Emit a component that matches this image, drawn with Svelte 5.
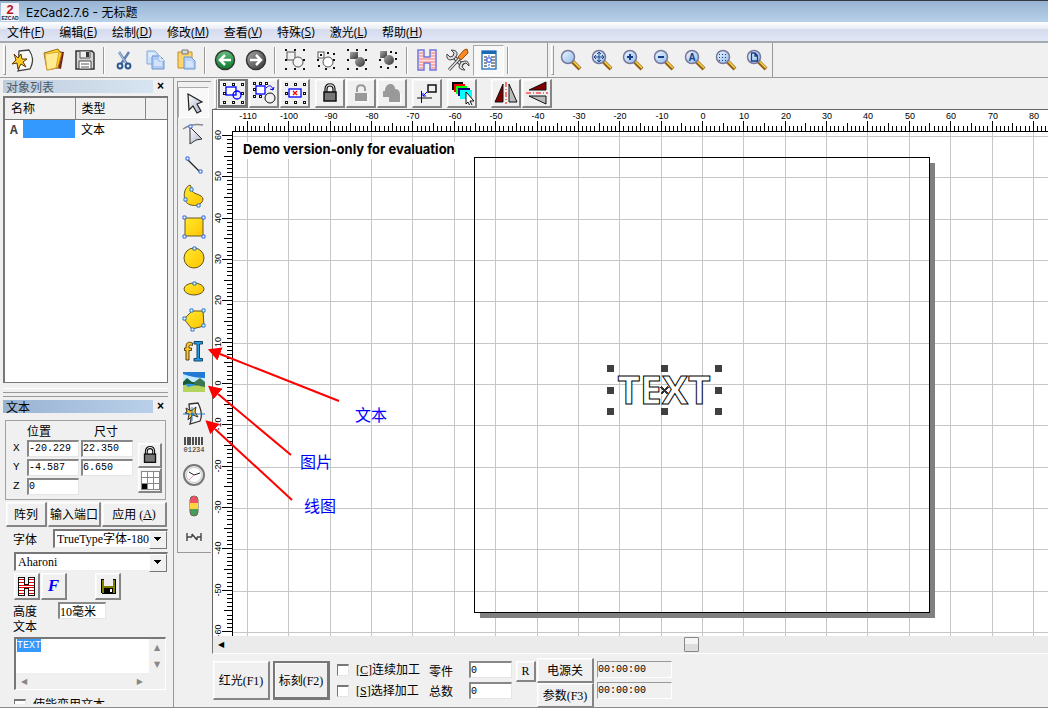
<script lang="ts">
  import { onMount } from "svelte";

  const icons: Record<string, string> = {
    new: `<path d="M8 3l10-1c4 6 5 11 1 19l-12 2c3-7 0-13 1-20z" fill="#fbfbfb" stroke="#444" stroke-width="1.3"/><path d="M3 6l4 4 3-4 1 5 5 0-4 3 3 5-5-3-3 5-1-6-5 1 4-4z" fill="#ffc928" stroke="#5c3b00"/>`,
    open: `<path d="M13 3l9 1-3 17-9-2z" fill="#7a2418"/><path d="M2 5l14-4 2 3 2 1-4 15-11 2z" fill="url(#gold)" stroke="#99691a"/><path d="M3 6l14-2-3 16-9 2z" fill="#ffeb91" stroke="#d9a63c"/>`,
    save: `<path d="M3 3h16l2 2v16H3z" fill="#d4d4d4" stroke="#333" stroke-width="1.5"/><path d="M7 3h10v7H7z" fill="#eee" stroke="#555"/><path d="M13 4h3v5h-3z" fill="#333"/><path d="M6 13h12v8H6z" fill="#fff" stroke="#444"/><path d="M8 16h8M8 19h8" stroke="#555"/>`,
    cut: `<path d="M7 4l8 12M17 4L9 16" stroke="#5f7fae" stroke-width="2.4"/><path d="M7 4l7 11" stroke="#d9e9ff" stroke-width=".8"/><circle cx="8" cy="18" r="2.4" fill="none" stroke="#2b5797" stroke-width="2"/><circle cx="16" cy="18" r="2.4" fill="none" stroke="#2b5797" stroke-width="2"/>`,
    copy: `<path d="M4 3h8l3 3v10H4z" fill="#cfe2fb" stroke="#86aadb"/><path d="M9 8h8l4 4v9H9z" fill="#aecbf3" stroke="#6c94cf"/><path d="M17 8v4h4M6 6h5M6 8h3M11 13h4M11 15h8M11 17h8" fill="none" stroke="#f8fbff"/>`,
    paste: `<path d="M4 4h14v16H4z" fill="#ffd56e" stroke="#c18b28"/><path d="M8 2h6v4H8z" fill="#d8d8d8" stroke="#777"/><path d="M10 9h7l4 4v8H10z" fill="#b7d3f7" stroke="#6c94cf"/><path d="M12 14h6M12 16h7M12 18h7" stroke="#edf5ff"/>`,
    back: `<circle cx="12" cy="12" r="9.5" fill="url(#green)" stroke="#333" stroke-width="1.5"/><path d="M18 12H8M12 7l-5 5 5 5" fill="none" stroke="#fff" stroke-width="2.5"/>`,
    forward: `<circle cx="12" cy="12" r="9.5" fill="url(#dark)" stroke="#333" stroke-width="1.5"/><path d="M6 12h10M12 7l5 5-5 5" fill="none" stroke="#fff" stroke-width="2.5"/>`,
    combine: `<rect x="4" y="4" width="8" height="8" fill="none" stroke="#555"/><circle cx="15" cy="14" r="5" fill="#f4f4f4" stroke="#555"/><path d="M2 1h2v2H2zM11 1h2v2h-2zM20 1h2v2h-2zM2 11h2v2H2zM20 11h2v2h-2zM2 20h2v2H2zM11 20h2v2h-2zM20 20h2v2h-2z" fill="#111"/>`,
    uncombine: `<rect x="4" y="4" width="6" height="6" fill="#fff" stroke="#555"/><circle cx="14" cy="14" r="5" fill="#fff" stroke="#555"/><path d="M6 6h2v2H6zM13 4h2v2h-2zM3 11h2v2H3zM19 5h2v2h-2zM19 11h2v2h-2zM4 17h2v2H4zM19 19h2v2h-2zM11 20h2v2h-2z" fill="#111"/>`,
    group: `<rect x="5" y="4" width="8" height="7" fill="url(#dark)"/><circle cx="15" cy="14" r="5" fill="url(#dark)"/><path d="M2 1h2v2H2zM11 1h2v2h-2zM20 1h2v2h-2zM2 11h2v2H2zM20 11h2v2h-2zM2 20h2v2H2zM11 20h2v2h-2zM20 20h2v2h-2z" fill="#111"/>`,
    ungroup: `<rect x="4" y="3" width="7" height="7" fill="url(#dark)"/><circle cx="13" cy="12" r="5" fill="url(#dark)"/><path d="M14 3h2v2h-2zM19 4h2v2h-2zM3 11h2v2H3zM19 10h2v2h-2zM4 18h2v2H4zM19 18h2v2h-2zM11 19h2v2h-2z" fill="#111"/>`,
    hatch: `<path d="M3 2h6v7h6V2h6v20h-6v-7H9v7H3z" fill="#ffe4e4" stroke="#6d75dc" stroke-width="1.5"/><path d="M4 5h4M16 5h4M4 8h4M16 8h4M4 11h16M4 14h16M4 17h4M16 17h4M4 20h4M16 20h4" stroke="#f27878"/>`,
    tools: `<path d="M7 8l10 10" stroke="#444" stroke-width="4"/><path d="M7 8l11 11" stroke="#ddd" stroke-width="2"/><path d="M5 2l3 3-1 3-3 1-3-3q-1 5 3 6l4-1 3-4q1-5-6-5zM19 22l-3-3 1-3 3-1 3 3q0-5-4-5l-4 1-2 4q0 4 6 4z" fill="#ddd" stroke="#444"/><path d="M13 11L3 22" stroke="#444" stroke-width="3"/><path d="M13 11L3 22" stroke="#eee" stroke-width="1.2"/><path d="M21 1l1 4-7 7-3-3 6-7z" fill="#f98a20" stroke="#9d4b0d"/>`,
    list: `<rect x="5" y="3" width="14" height="18" fill="#fff" stroke="#176bb4" stroke-width="1.3"/><path d="M5 3h14v3H5z" fill="#176bb4"/><path d="M7 9h3M7 12h3M7 15h3M7 18h3M14 9h4M14 12h4M14 15h4M14 18h4" stroke="#222"/><path d="M12 7v13" stroke="#25f" stroke-dasharray="2 1"/><path d="M10 10h4v4h-4z" fill="#fff" stroke="#25f"/>`,
    zoom: ``,
    zoomMove: `<path d="M9 4v10M4 9h10M7 6l2-2 2 2M7 12l2 2 2-2M6 7L4 9l2 2M12 7l2 2-2 2" fill="none" stroke="#244986"/>`,
    zoomIn: `<path d="M9 6v6M6 9h6" stroke="#173f85" stroke-width="2"/>`,
    zoomOut: `<path d="M6 9h6" stroke="#173f85" stroke-width="2"/>`,
    zoomAll: `<text x="9" y="13" font-family="Liberation Sans" font-size="10" font-weight="bold" text-anchor="middle" fill="#173f85">A</text>`,
    zoomSelection: `<path d="M5 6.5h1M8 6.5h1M11 6.5h1M5 9.5h1M8 9.5h1M11 9.5h1M5 12.5h1M8 12.5h1M11 12.5h1" stroke="#173f85"/>`,
    zoomPage: `<path d="M6.500 5h3.500l2.500 2.500v5.500h-6zM10 5v3h2" fill="none" stroke="#173f85" stroke-width="1.3"/>`,
    selectAll: `<rect x="5" y="6" width="10" height="8" fill="#fff" stroke="#00f" stroke-width="1.3"/><circle cx="16" cy="14" r="4" fill="none" stroke="#00f" stroke-width="1.3"/>`,
    invert: `<rect x="4" y="5" width="9" height="8" fill="#fff" stroke="#00f" stroke-width="1.3"/><circle cx="18" cy="17" r="5" fill="none" stroke="#111"/><path d="M14 7c4-4 6-2 7 2m-3-1l3 1 1-3" fill="none" stroke="#00f"/><path d="M1 1h3v3H1zM7 1h3v3H7zM13 1h3v3h-3zM1 7h3v3H1zM1 14h3v3H1zM7 14h3v3H7z" fill="#111"/><path d="M2 2h1v1H2zM8 2h1v1H8zM14 2h1v1h-1zM2 8h1v1H2zM2 15h1v1H2zM8 15h1v1H8z" fill="#fff"/>`,
    selectNone: `<rect x="6" y="8" width="12" height="8" fill="#fff" stroke="#00f" stroke-width="1.3"/><path d="M10 10l4 4M14 10l-4 4" stroke="red" stroke-width="1.3"/>`,
    lock: `<path d="M7 11V8c0-7 10-7 10 0v3M9 11V8c0-4 6-4 6 0v3" fill="none" stroke="#111" stroke-width="1.2"/><rect x="6" y="11" width="12" height="9" fill="#777" stroke="#111" stroke-width="1.5"/>`,
    unlock: `<path d="M8 11V8c0-5 8-5 8 0v2" fill="none" stroke="#999" stroke-width="2"/><path d="M6 12h12v8H6z" fill="#999"/><path d="M7 21h12V12" fill="none" stroke="#fff"/>`,
    unlockAll: `<path d="M3 10h2c0-9 10-9 10-2 4 0 5 3 5 6v7H9v-5H3z" fill="#999"/><path d="M9 22h12V13" fill="none" stroke="#fff"/>`,
    origin: `<path d="M2 17h15M6.500 10v12" stroke="#111"/><rect x="13" y="4" width="8" height="7" fill="none" stroke="#111" stroke-width="1.5"/><path d="M12 11l-4 4m0-3v3h3" fill="none" stroke="#00f"/>`,
    layers: `<path d="M2 1h11v8H2z" fill="#000"/><path d="M4 3h11v8H4z" fill="red"/><path d="M6 5h11v8H6z" fill="#0f0"/><path d="M8 7h12v8H8z" fill="#000080"/><path d="M10 9h12v9H10z" fill="cyan"/><path d="M16 11l8 9h-4l2 4-2 1-2-4-2 2z" fill="#fff" stroke="#111"/>`,
    mirrorH: `<path d="M9 3v18H1z" fill="#800000" stroke="#111"/><path d="M15 3v18h8z" fill="#bbb" stroke="#111"/><path d="M12 1v22" stroke="red" stroke-dasharray="5 2 1 2"/>`,
    mirrorV: `<path d="M21 1v8H4z" fill="#800000" stroke="#111"/><path d="M21 15v8L4 15z" fill="#bbb" stroke="#111"/><path d="M1 12h22" stroke="red" stroke-dasharray="5 2 1 2"/>`,
    pick: `<path d="M6 3l14 8-5 2 4 7-4 2-4-7-4 4z" fill="url(#arrow)" stroke="#222" stroke-width="1.2"/>`,
    node: `<path d="M1 7Q10 1 21 3" fill="none" stroke="#888" stroke-width="1.5"/><path d="M8 5l12 12-6 1-6 4z" fill="url(#arrow)" stroke="#333"/><path d="M7 3h3v3H7z" fill="#fff" stroke="#36d"/>`,
    line: `<path d="M5 6l13 13" stroke="#222" stroke-width="1.3"/><path d="M4 4h3v3H4zM17 17h3v3h-3z" fill="#fff" stroke="#36d"/>`,
    curve: `<path d="M3 16C1 10 3 3 8 1c2 1 0 4 2 6 3 4 10 3 11 8-1 9-16 8-18 1z" fill="url(#gold)" stroke="#66541b"/><path d="M8 4h3v3H8zM2 14h3v3H2zM15 20h3v3h-3z" fill="#fff" stroke="#27c"/>`,
    rect: `<rect x="3" y="3" width="18" height="18" fill="url(#gold)" stroke="#665a28"/><path d="M1 1h3v3H1zM20 1h3v3h-3zM1 20h3v3H1zM20 20h3v3h-3z" fill="#fff" stroke="#36d"/>`,
    circle: `<circle cx="12" cy="12" r="10" fill="url(#gold)" stroke="#66541b"/><path d="M11 1h3v3h-3z" fill="#fff" stroke="#27c"/>`,
    ellipse: `<ellipse cx="12" cy="12" rx="10" ry="6" fill="url(#gold)" stroke="#66541b"/><path d="M11 5h3v3h-3z" fill="#fff" stroke="#27c"/>`,
    polygon: `<path d="M10 3h11l1 15-12 3L2 11z" fill="url(#gold)" stroke="#66541b"/><path d="M8 1h3v3H8zM20 1h3v3h-3zM1 9h3v3H1zM9 20h3v3H9zM20 16h3v3h-3z" fill="#fff" stroke="#27c"/>`,
    text: `<path d="M10.500 4c-5-2-6.500 0-6.500 5H2.500v2.500H4V21h3v-9.500h2.500V9H7c0-2.500 0-3.500 3.500-2.500z" fill="#ffc522" stroke="#554519"/><path d="M12 2.500h8.500V5h-3v14.500h3V22H12v-2.500h3V5h-3z" fill="#1f9be8" stroke="#174663"/>`,
    picture: `<path d="M1 2h22v20H1z" fill="#c4ebff"/><path d="M1 2h22v6Q12 8 1 4z" fill="#2379d4"/><path d="M1 12l4-4 5 4 6 0v8L1 18z" fill="#175b36"/><path d="M11 13l7-5 5 4v7z" fill="#3d7650"/><path d="M1 15q9-1 22 2v5H1z" fill="#b5d35f"/><path d="M3 14q7-1 11 1l-8 2z" fill="#2c92e8"/>`,
    vector: `<path d="M7 3l9-1c3 6 5 12 2 18l-10 3c3-7-1-13-1-20z" fill="#f8f8f8" stroke="#333" stroke-width="1.3"/><path d="M4 7l5 3 5-4-1 5 3 5-5-2-5 5 1-6-4-1 2-1z" fill="#ffc926" stroke="#333"/><path d="M1 13h22M10 6v14" stroke="#277acc"/><path d="M9 12h3v3H9z" fill="#277acc"/>`,
    barcode: `<path d="M3 5v8M6 5v8M8 5v8M11 5v8M14 5v8M17 5v8M20 5v8" stroke="#333" stroke-width="1.7"/><text x="12" y="20" font-family="Liberation Mono" font-size="7" text-anchor="middle" fill="#222">01234</text>`,
    clock: `<circle cx="12" cy="12" r="10" fill="#eee" stroke="#777" stroke-width="2"/><circle cx="12" cy="12" r="7.5" fill="#fff" stroke="#ccc"/><path d="M7 9l5 3 6-2" fill="none" stroke="#222"/><path d="M12 12l-5 5" stroke="#e99"/>`,
    io: `<rect x="8" y="2" width="8" height="20" rx="4" fill="#4c9c59" stroke="#665"/><path d="M8 9V6q4-8 8 0v3z" fill="#ed5364"/><path d="M8 9h8v6H8z" fill="#ffd33d"/>`,
    extend: `<path d="M5 8v8M19 8v8M5 12h5M15 12h4M10 9l5 6M10 12V9M15 15v-3" fill="none" stroke="#444" stroke-width="1.4"/>`,
  };

  const dots = `<path d="M2 2h3v3H2zM11 2h3v3h-3zM20 2h3v3h-3zM2 11h3v3H2zM20 11h3v3h-3zM2 20h3v3H2zM11 20h3v3h-3zM20 20h3v3h-3z" fill="#111"/><path d="M3 3h1v1H3zM12 3h1v1h-1zM21 3h1v1h-1zM3 12h1v1H3zM21 12h1v1h-1zM3 21h1v1H3zM12 21h1v1h-1zM21 21h1v1h-1z" fill="#fff"/>`;
  const lens = `<path d="M13 13l8 8" stroke="#93601b" stroke-width="4"/><path d="M14 13l7 7" stroke="#ffdc45" stroke-width="1.5"/><circle cx="9" cy="9" r="6.5" fill="url(#glass)" stroke="#77779e" stroke-width="1.5"/>`;

  const menus = [
    ["文件", "F"], ["编辑", "E"], ["绘制", "D"], ["修改", "M"],
    ["查看", "V"], ["特殊", "S"], ["激光", "L"], ["帮助", "H"],
  ];
  const mainTools = [
    ["new", "open", "save"],
    ["cut", "copy", "paste"],
    ["back", "forward"],
    ["combine", "uncombine", "group", "ungroup"],
    ["hatch", "tools", "list"],
  ];
  const zoomTools = ["zoom", "zoomMove", "zoomIn", "zoomOut", "zoomAll", "zoomSelection", "zoomPage"];
  const editTools = [
    ["selectAll", "invert", "selectNone"],
    ["lock", "unlock", "unlockAll"],
    ["origin"],
    ["layers"],
    ["mirrorH", "mirrorV"],
  ];
  const drawTools = ["pick", "node", "line", "curve", "rect", "circle", "ellipse", "polygon", "text", "picture", "vector", "barcode", "clock", "io", "extend"];

  // origin of the work area and size of one millimetre, in pixels
  const ox = 489;
  const oy = 274;
  const mm = 4.136;
  const px = (v: number) => Math.round(ox + v * mm);
  const py = (v: number) => Math.round(oy - v * mm);
  const range = (from: number, to: number) => Array.from({ length: Math.max(0, to - from + 1) }, (_, i) => from + i);
  const tick = (v: number) => (v % 10 === 0 ? 10 : v % 5 === 0 ? 8 : 5);
  const handles = [[397, 258], [451, 258], [505, 258], [397, 280], [505, 280], [397, 301], [451, 301], [505, 301]];

  let width = $state(835);
  let depth = $state(525);
  let xs = $derived(range(-113, Math.floor((width - ox) / mm)));
  let ys = $derived(range(-Math.floor((depth - oy) / mm), 60));

  let posX = $state("-20.229");
  let posY = $state("-4.587");
  let posZ = $state("0");
  let sizeX = $state("22.350");
  let sizeY = $state("6.650");
  let height = $state("10毫米");
  let content = $state("TEXT");
  let parts = $state("0");
  let total = $state("0");
  let scroll = $state(566);
  let tool = $state("pick");
  let area: HTMLTextAreaElement;

  onMount(() => {
    area.focus({ preventScroll: true });
    area.select();
  });
</script>

{#snippet icon(name: string, size = 24)}
  <svg width={size} height={size} viewBox="0 0 24 24" aria-hidden="true">
    {@html (name.startsWith("zoom") ? lens : name === "selectAll" || name === "selectNone" ? dots : "") + icons[name]}
  </svg>
{/snippet}

<svg class="defs" width="0" height="0">
  <defs>
    <linearGradient id="gold" x2="1" y2="1"><stop stop-color="#ffe92e" /><stop offset="1" stop-color="#ffc400" /></linearGradient>
    <linearGradient id="arrow" x2="1" y2="1"><stop stop-color="#fff" /><stop offset="1" stop-color="#a9afc8" /></linearGradient>
    <linearGradient id="green" x2="0" y2="1"><stop stop-color="#63bd7c" /><stop offset="1" stop-color="#087c2b" /></linearGradient>
    <linearGradient id="dark" x2="1" y2="1"><stop stop-color="#aaa" /><stop offset="1" stop-color="#333" /></linearGradient>
    <linearGradient id="glass" x2="1" y2="1"><stop stop-color="#eef8ff" /><stop offset="1" stop-color="#8fbbe9" /></linearGradient>
  </defs>
</svg>

<div class="window">
  <header class="title">
    <svg width="18" height="18" viewBox="0 0 18 18" aria-hidden="true">
      <rect width="18" height="18" fill="#f4f2f7" />
      <text x="9" y="11" class="logo-num">2</text>
      <text x="9" y="17" class="logo-name">EZCAD</text>
    </svg>
    <span>EzCad2.7.6 - 无标题</span>
  </header>

  <nav class="menu">
    {#each menus as [name, key]}
      <button>{name}(<u>{key}</u>)</button>
    {/each}
  </nav>

  <div class="toolbar">
    <i class="grip"></i>
    {#each mainTools as group}
      {#each group as name}
        <button class:on={name === "list"} aria-label={name}>{@render icon(name)}</button>
      {/each}
      <i class="sep"></i>
    {/each}
    <i class="space"></i>
    <i class="grip"></i>
    {#each zoomTools as name}
      <button aria-label={name}>{@render icon(name)}</button>
    {/each}
    <i class="end"></i>
  </div>

  <main>
    <aside>
      <div class="caption inactive"><h2>对象列表</h2><button aria-label="关闭对象列表">×</button></div>
      <div class="objects">
        <table>
          <thead><tr><th>名称</th><th>类型</th><th></th></tr></thead>
          <tbody><tr><td><div class="cell"><b>A</b><span class="picked"></span></div></td><td>文本</td><td></td></tr></tbody>
        </table>
      </div>
      <div class="split"></div>
      <div class="caption"><h2>文本</h2><button aria-label="关闭文本">×</button></div>

      <div class="group">
        <div class="coords">
          <span></span><span class="head">位置</span><span class="head right">尺寸</span>
          <label for="x">X</label><input id="x" bind:value={posX} /><input aria-label="尺寸 X" bind:value={sizeX} />
          <label for="y">Y</label><input id="y" bind:value={posY} /><input aria-label="尺寸 Y" bind:value={sizeY} />
          <label for="z">Z</label><input id="z" bind:value={posZ} />
        </div>
        <div class="side">
          <button class="raised" aria-label="锁定比例">{@render icon("lock", 22)}</button>
          <button class="raised" aria-label="基准点">
            <svg width="20" height="20" viewBox="0 0 20 20" shape-rendering="crispEdges">
              <path d="M1 1h18v18H1z" fill="#fff" /><path d="M1 13h6v6H1z" />
              <path d="M1 1h18v18H1zM7 1v18M13 1v18M1 7h18M1 13h18" fill="none" stroke="#888" />
            </svg>
          </button>
        </div>
      </div>

      <div class="actions">
        <button class="raised">阵列</button>
        <button class="raised">输入端口</button>
        <button class="raised">应用 (<u>A</u>)</button>
      </div>
      <div class="font-row">
        <label for="kind">字体</label>
        <div class="combo"><select id="kind"><option>TrueType字体-180</option></select></div>
      </div>
      <div class="combo face"><select aria-label="字体名称"><option>Aharoni</option></select></div>
      <div class="styles">
        <button class="raised" aria-label="填充">
          <svg width="17" height="19" viewBox="0 0 17 19" shape-rendering="crispEdges">
            <path d="M.5 .5h6v7h4v-7h6v18h-6v-7h-4v7h-6z" fill="#fff" stroke="#111" />
            <path d="M1 2.500h5M1 5.500h5M11 2.500h5M11 5.500h5M1 8.500h15M1 10.500h15M1 13.500h5M1 16.500h5M11 13.500h5M11 16.500h5" stroke="#d00" />
          </svg>
        </button>
        <button class="raised italic">F</button>
        <button class="raised disk" aria-label="保存">
          <svg width="16" height="16" viewBox="0 0 16 16" shape-rendering="crispEdges">
            <path d="M1 1h14v14H2l-1-1z" fill="#808000" stroke="#000" /><path d="M4 1h9v7H4z" fill="#eee" /><path d="M4 10h9v5H4z" /><path d="M10 11h2v3h-2z" fill="#fff" />
          </svg>
        </button>
      </div>
      <div class="height"><label for="height">高度</label><input id="height" bind:value={height} /></div>
      <label class="text-label" for="content">文本</label>
      <div class="editor">
        <textarea id="content" bind:this={area} bind:value={content}></textarea>
        <div class="vbar"><span>▲</span><span>▼</span></div>
        <div class="hbar"><span>◀</span><span>▶</span></div>
      </div>
      <div class="variable"><label><input type="checkbox" />使能变用文本</label></div>
    </aside>

    <div class="draw">
      <div class="draw-list">
        {#each drawTools as name}
          <button class:on={tool === name} aria-label={name} onclick={() => (tool = name)}>{@render icon(name)}</button>
        {/each}
      </div>
    </div>

    <section>
      <div class="edit">
        <i class="grip"></i>
        {#each editTools as group}
          <div class="set">
            {#each group as name}
              <button class="raised" class:default={name === "selectAll"} aria-label={name}>{@render icon(name)}</button>
            {/each}
          </div>
        {/each}
      </div>

      <div class="canvas" bind:clientWidth={width} bind:clientHeight={depth}>
        <svg {width} height={depth} shape-rendering="crispEdges">
          {#each xs.filter((v) => v % 10 === 0) as v}
            <path d="M{px(v)}.5 22V{depth}" stroke="#c6c6c6" />
          {/each}
          {#each ys.filter((v) => v % 10 === 0) as v}
            <path d="M20 {py(v)}.5H{width}" stroke="#c6c6c6" />
          {/each}
          <path d="M717 53h5v455H267v-5h450z" fill="#808080" />
          <rect x="261.5" y="47.5" width="455" height="455" fill="none" stroke="#000" />

          <rect x="27" y="32" width="222" height="17" fill="#fff" />
          <text x="30" y="44" class="demo">Demo version-only for evaluation</text>

          <text x="451" y="294" class="shape">TEXT</text>
          {#each handles as [x, y]}
            <rect x={x - 3} y={y - 3} width="7" height="7" fill="#404040" />
          {/each}
          <path d="M448 277l7 7M455 277l-7 7" stroke="#333" stroke-width="2" />

          <rect {width} height="21" fill="#fff" />
          <rect y="22" width="19" height={depth} fill="#fff" />
          {#each xs as v}
            <path d="M{px(v)}.5 {21 - tick(v)}V21" stroke="#000" />
            {#if v % 10 === 0}<text x={px(v) + 1} y="9" class="num">{v}</text>{/if}
          {/each}
          {#each ys as v}
            <path d="M{19 - tick(v)} {py(v) - 1}.5H19" stroke="#000" />
            {#if v % 10 === 0}<text transform="translate(8 {py(v) - 1}) rotate(-90)" class="num">{v}</text>{/if}
          {/each}
          <path d="M19 21.5H{width}M19.5 21V{depth}" stroke="#000" />
        </svg>
      </div>

      <div class="scroll">
        <button aria-label="向左滚动">◀</button>
        <input type="range" min="0" max="1000" aria-label="水平滚动" bind:value={scroll} />
      </div>

      <footer>
        <button class="raised big">红光(F1)</button>
        <button class="raised big default">标刻(F2)</button>
        <div class="pair checks">
          <label><input type="checkbox" />[<u>C</u>]连续加工</label>
          <label><input type="checkbox" />[<u>S</u>]选择加工</label>
        </div>
        <div class="pair names">
          <label for="parts">零件</label>
          <label for="total">总数</label>
        </div>
        <div class="pair counts">
          <input id="parts" bind:value={parts} />
          <input id="total" bind:value={total} />
        </div>
        <button class="raised reset">R</button>
        <div class="power">
          <button class="raised">电源关</button>
          <button class="raised">参数(F3)</button>
        </div>
        <div class="pair times">
          <output>00:00:00</output>
          <output>00:00:00</output>
        </div>
      </footer>
    </section>
  </main>

  <svg class="notes">
    <defs>
      <marker id="head" markerWidth="14" markerHeight="14" refX="0" refY="7" orient="auto-start-reverse" markerUnits="userSpaceOnUse">
        <path d="M0 0l13 7-13 7z" fill="red" />
      </marker>
    </defs>
    <g stroke="red" stroke-width="2" marker-start="url(#head)">
      <path d="M220 354L339 401" />
      <path d="M218 394L291 455" />
      <path d="M215 429L292 500" />
    </g>
    <text x="355" y="421">文本</text>
    <text x="300" y="468">图片</text>
    <text x="304" y="512">线图</text>
  </svg>
</div>

<style>
  :global(body) {
    background: #f0f0f0;
    overflow: hidden;
  }
  .window {
    position: relative;
    display: flex;
    flex-direction: column;
    height: 100vh;
    box-sizing: border-box;
    border-bottom: 1px solid #888;
    overflow: hidden;
    background: #f0f0f0;
    color: #000;
    font: 12px "Liberation Serif", "Noto Sans CJK SC", serif;
  }
  .window * {
    box-sizing: border-box;
  }
  .defs {
    position: absolute;
  }
  button, input, select, textarea {
    margin: 0;
    padding: 0;
    border: 0;
    border-radius: 0;
    outline: 0;
    background: none;
    color: inherit;
    font: inherit;
  }
  button {
    display: flex;
    flex: none;
    align-items: center;
    justify-content: center;
    white-space: pre;
  }
  svg {
    display: block;
    flex: none;
  }
  .title {
    display: flex;
    flex: none;
    align-items: center;
    gap: 7px;
    height: 22px;
    padding-left: 1px;
    border-top: 1px solid #353740;
    background: linear-gradient(#98b4d3, #b8d0e9);
    font: 12px Inter, "Noto Sans CJK SC", sans-serif;
  }
  .logo-num {
    font: bold 13px "Liberation Sans", sans-serif;
    fill: #b71724;
    text-anchor: middle;
  }
  .logo-name {
    font: bold 5px "Liberation Sans", sans-serif;
    fill: #223;
    text-anchor: middle;
  }
  .menu {
    display: flex;
    flex: none;
    height: 21px;
    gap: 15px;
    padding-left: 7px;
    background: linear-gradient(#fff, #e9edf6 35%, #d5dbed 36%, #dfe5f4 90%);
    border-bottom: 2px solid #a4a8b0;
    font: 12px "Open Sans", "Noto Sans CJK SC", sans-serif;
  }
  .toolbar {
    display: flex;
    flex: none;
    align-items: center;
    height: 35px;
    padding-left: 3px;
    border-bottom: 1px solid #999;
  }
  .toolbar button {
    width: 31px;
    height: 31px;
  }
  .on {
    border: 1px solid #aaa;
    border-right-color: #fff;
    border-bottom-color: #fff;
    background: #f8f8f8;
  }
  .grip {
    width: 3px;
    height: 30px;
    margin-right: 1px;
    border: 1px solid #fff;
    border-right-color: #999;
    border-bottom-color: #999;
  }
  .sep {
    width: 2px;
    height: 27px;
    margin: 0 3px;
    border-left: 1px solid #999;
    border-right: 1px solid #fff;
  }
  .space, .end {
    height: 34px;
  }
  .space {
    width: 36px;
    margin-right: 3px;
    border-right: 1px solid #999;
  }
  .end {
    border-left: 1px solid #999;
  }
  main {
    display: flex;
    flex: 1;
    min-height: 0;
  }
  aside {
    display: flex;
    flex: none;
    flex-direction: column;
    width: 174px;
    padding: 2px 5px 3px 3px;
    border-right: 1px solid #999;
    overflow: hidden;
  }
  .caption {
    display: flex;
    flex: none;
    height: 13px;
    margin-bottom: 7px;
  }
  .caption h2 {
    width: 150px;
    margin: 0;
    padding-left: 3px;
    background: linear-gradient(90deg, #98b3d2, #bad0ea);
    font: 12px/13px "Noto Sans CJK SC", sans-serif;
  }
  .caption.inactive {
    margin-bottom: 3px;
  }
  .inactive h2 {
    background: linear-gradient(90deg, #becddd, #d7e4f1);
    color: #4c5a66;
  }
  .caption button {
    width: 15px;
    font: bold 12px/13px "Liberation Sans", sans-serif;
  }
  .objects {
    flex: 1;
    min-height: 80px;
    border: 2px solid #777;
    border-right: 1px solid #777;
    border-bottom: 1px solid #777;
    background: #fff;
    font-family: "Noto Sans CJK SC", sans-serif;
  }
  table {
    width: 100%;
    border-collapse: collapse;
    table-layout: fixed;
  }
  th, td {
    height: 18px;
    padding: 0 0 0 6px;
    font-weight: normal;
    line-height: 18px;
    text-align: left;
  }
  th {
    height: 21px;
    background: #f0f0f0;
    border-right: 1px solid #888;
    border-bottom: 1px solid #777;
  }
  th:nth-child(-n + 2) {
    width: 70px;
  }
  th:last-child {
    border-right: 0;
  }
  td:first-child {
    padding: 0;
  }
  .cell {
    display: flex;
    align-items: center;
    justify-content: space-between;
    padding-left: 5px;
  }
  .cell b {
    color: #444;
  }
  .picked {
    width: 52px;
    height: 18px;
    background: #39f;
  }
  .split {
    flex: none;
    height: 9px;
    margin: 5px 0 3px;
    border-top: 1px solid #fff;
    border-bottom: 1px solid #999;
    background: linear-gradient(transparent 3px, #999 3px, #999 4px, transparent 4px);
  }
  .group {
    display: flex;
    flex: none;
    justify-content: space-between;
    height: 80px;
    margin: 0 2px;
    padding: 4px 3px 4px 5px;
    border: 1px solid #a0a0a0;
  }
  .coords {
    display: grid;
    grid-template-columns: 14px 52px 52px;
    grid-template-rows: 13px 18px 18px 18px;
    gap: 1px 2px;
    align-items: center;
  }
  .head {
    line-height: 12px;
  }
  .head.right {
    padding-left: 13px;
  }
  .coords label {
    padding-left: 2px;
    font: 11px "Liberation Mono", monospace;
  }
  .coords input, .height input, .counts input, .times output {
    width: 100%;
    height: 17px;
    min-width: 0;
    border: 1px solid #e5e5e5;
    border-top: 2px solid #888;
    border-left: 2px solid #888;
    background: #fff;
    font: 10px "Liberation Mono", monospace;
  }
  .side {
    padding-top: 18px;
  }
  .side button {
    width: 24px;
    height: 25px;
  }
  .raised {
    border: 1px solid #fff;
    border-right: 2px solid #858585;
    border-bottom: 2px solid #858585;
    background: #f0f0f0;
    box-shadow: inset 1px 1px #f8f8f8;
  }
  .actions {
    display: flex;
    flex: none;
    height: 25px;
    gap: 1px;
    margin: 2px 1px 2px 3px;
  }
  .actions button:nth-child(1) {
    width: 41px;
  }
  .actions button:nth-child(2) {
    width: 53px;
  }
  .actions button:nth-child(3) {
    flex: 1;
  }
  .font-row {
    display: flex;
    flex: none;
    align-items: center;
    margin-left: 10px;
  }
  .font-row label {
    width: 40px;
  }
  .combo {
    position: relative;
    flex: 1;
    height: 19px;
    min-width: 0;
    border: 1px solid #eee;
    border-top: 2px solid #777;
    border-left: 2px solid #777;
    background: #fff;
  }
  .combo select {
    width: 100%;
    height: 16px;
    padding-right: 15px;
    padding-left: 2px;
    appearance: none;
    font-size: 12px;
    line-height: 16px;
  }
  .combo::after {
    content: "";
    position: absolute;
    top: 0;
    right: 0;
    width: 16px;
    height: 16px;
    border: 1px solid #fff;
    border-right-color: #777;
    border-bottom-color: #777;
    background: linear-gradient(#000, #000) 4px 5px / 7px 1px no-repeat, linear-gradient(#000, #000) 5px 6px / 5px 1px no-repeat, linear-gradient(#000, #000) 6px 7px / 3px 1px no-repeat, linear-gradient(#000, #000) 7px 8px / 1px 1px no-repeat, #f0f0f0;
    pointer-events: none;
  }
  .face {
    flex: none;
    margin: 4px 0 2px 11px;
  }
  .styles {
    display: flex;
    flex: none;
    gap: 1px;
    margin: 0 0 2px 11px;
  }
  .styles button {
    width: 26px;
    height: 27px;
  }
  .styles .italic {
    color: #00f;
    font: italic bold 17px "Liberation Serif", serif;
  }
  .styles .disk {
    margin-left: 27px;
  }
  .height {
    display: flex;
    flex: none;
    align-items: center;
    height: 17px;
    margin-left: 10px;
  }
  .height label {
    width: 45px;
  }
  .height input {
    width: 48px;
    font: 12px "Liberation Serif", "Noto Sans CJK SC", serif;
  }
  .text-label {
    flex: none;
    margin-left: 10px;
    line-height: 16px;
  }
  .editor {
    display: grid;
    flex: none;
    grid-template-columns: 1fr 16px;
    grid-template-rows: 1fr 16px;
    height: 53px;
    margin: 2px 2px 8px 11px;
    border: 1px solid #fff;
    border-top: 2px solid #777;
    border-left: 2px solid #777;
    background: #fff;
  }
  textarea {
    width: 100%;
    height: 100%;
    padding-left: 1px;
    overflow: hidden;
    resize: none;
    font: 10px/13px "Liberation Mono", monospace;
  }
  textarea::selection {
    background: #39f;
    color: #fff;
  }
  .vbar, .hbar {
    display: flex;
    justify-content: space-between;
    background: #f0f0f0;
    color: #888;
    font: 8px "DejaVu Sans", sans-serif;
  }
  .vbar {
    flex-direction: column;
    align-items: center;
    padding: 4px 0;
  }
  .hbar {
    grid-column: 1 / 3;
    align-items: center;
    padding: 0 22px 0 5px;
  }
  .variable {
    flex: none;
    height: 6px;
    margin-left: 11px;
    overflow: hidden;
  }
  .variable label, .checks label {
    display: flex;
    align-items: center;
    line-height: 14px;
  }
  input[type="checkbox"] {
    width: 12px;
    height: 12px;
    margin-right: 7px;
    appearance: none;
    border: 1px solid #e5e5e5;
    border-top: 2px solid #777;
    border-left: 1px solid #777;
    background: #fff;
  }
  .draw {
    flex: none;
    width: 38px;
    padding: 3px 1px 0 3px;
  }
  .draw-list {
    padding: 5px 1px 0 0;
    border: 1px solid #999;
    border-right: 0;
  }
  .draw-list button {
    width: 31px;
    height: 31px;
  }
  section {
    display: flex;
    flex: 1;
    flex-direction: column;
    min-width: 0;
  }
  .edit {
    display: flex;
    flex: none;
    height: 32px;
    padding: 1px 0 0 2px;
  }
  .set {
    display: flex;
    gap: 1px;
    margin-right: 5px;
  }
  .set:nth-of-type(4) {
    margin-right: 14px;
  }
  .set button {
    width: 30px;
    height: 29px;
  }
  .default {
    border: 2px solid #777;
    border-right-width: 3px;
    border-bottom-width: 3px;
  }
  .canvas {
    flex: 1;
    min-height: 0;
    margin-top: -1px;
    border-top: 1px solid #666;
    border-left: 1px solid #666;
    overflow: hidden;
    background: #fff;
  }
  .num {
    font: 9px "Liberation Sans", sans-serif;
    text-anchor: middle;
  }
  .demo {
    font: bold 13px Inter, sans-serif;
  }
  .shape {
    font: bold 39px "Open Sans", sans-serif;
    fill: #fff;
    stroke: #000;
    text-anchor: middle;
    opacity: 0.99;
  }
  .scroll {
    display: flex;
    flex: none;
    align-items: center;
    height: 18px;
    border-left: 1px solid #777;
    border-bottom: 1px solid #fff;
    background: #ebebeb;
  }
  .scroll button {
    width: 16px;
    font: 8px "DejaVu Sans", sans-serif;
  }
  .scroll input {
    flex: 1;
    min-width: 0;
    height: 16px;
    appearance: none;
  }
  .scroll input::-webkit-slider-thumb {
    width: 15px;
    height: 15px;
    appearance: none;
    border: 1px solid #888;
    border-radius: 1px;
    background: linear-gradient(#f5f5f5 50%, #ddd 50%);
  }
  footer {
    display: flex;
    flex: none;
    height: 53px;
    padding: 7px 0 0 1px;
  }
  .big {
    width: 57px;
    height: 39px;
    margin-right: 3px;
  }
  .pair {
    display: flex;
    flex-direction: column;
    gap: 4px;
  }
  .checks {
    width: 96px;
    gap: 7px;
    padding: 2px 0 0 4px;
    white-space: nowrap;
  }
  .names {
    width: 40px;
    padding-top: 3px;
    line-height: 16px;
  }
  .counts {
    width: 43px;
    margin-right: 4px;
  }
  .reset {
    width: 20px;
    height: 21px;
    margin-right: 1px;
  }
  .power {
    width: 57px;
    margin: -3px 3px 0 0;
  }
  .power button {
    width: 57px;
    height: 25px;
  }
  .times {
    width: 75px;
  }
  .times output {
    border: 1px solid #fff;
    border-top: 1px solid #999;
    border-left: 1px solid #999;
    background: #f0f0f0;
    line-height: 16px;
  }
  .notes {
    position: absolute;
    top: 0;
    left: 0;
    width: 100%;
    height: 100%;
    pointer-events: none;
  }
  .notes text {
    fill: #00f;
    font: 16px "Noto Sans CJK SC", sans-serif;
  }
</style>
